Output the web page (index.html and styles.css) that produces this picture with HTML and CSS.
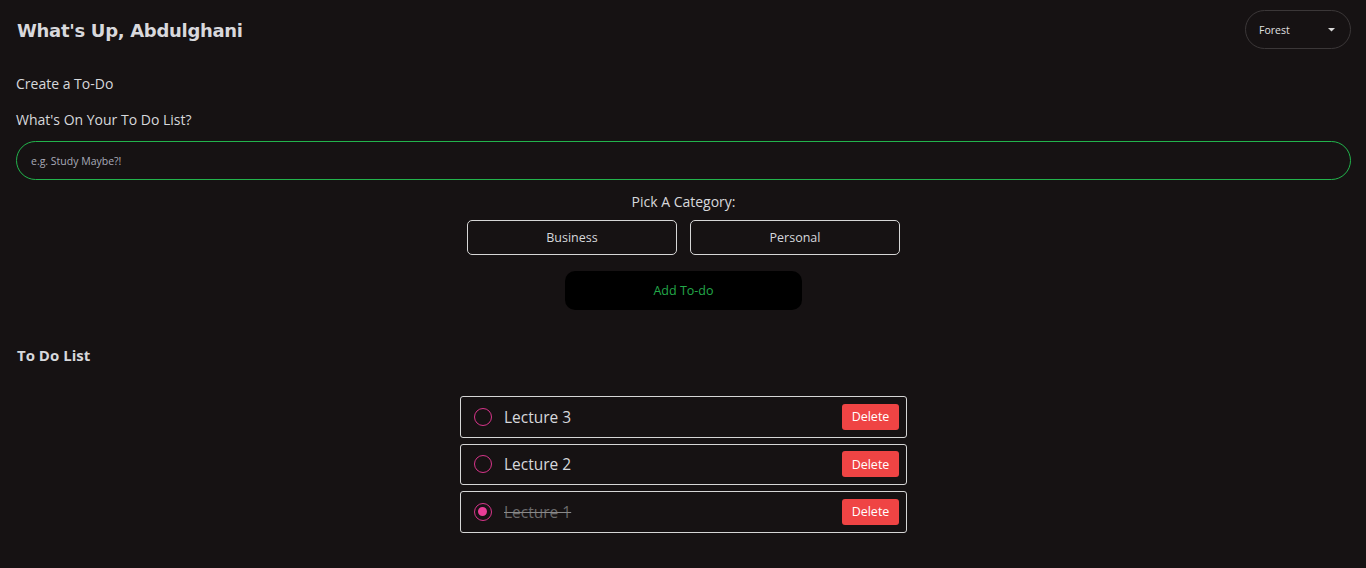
FILE: index.html
```html
<!DOCTYPE html>
<html lang="en">
<head>
<meta charset="utf-8">
<title>Todo</title>
<link rel="stylesheet" href="styles.css">
</head>
<body>
<div class="page">
  <header class="top">
    <h1 class="greeting">What's Up, Abdulghani</h1>
    <div class="theme">
      <span>Forest</span>
      <svg width="7" height="4" viewBox="0 0 7 4"><path d="M0 0h7L3.5 3.5z" fill="#d8d8d8"/></svg>
    </div>
  </header>
  <section class="create">
    <p class="label">Create a To-Do</p>
    <p class="label q">What's On Your To Do List?</p>
    <div class="input">e.g. Study Maybe?!</div>
    <p class="pick">Pick A Category:</p>
    <div class="cats">
      <button class="cat">Business</button>
      <button class="cat">Personal</button>
    </div>
    <button class="add">Add To-do</button>
  </section>
  <h2 class="list-title">To Do List</h2>
  <ul class="list">
    <li class="item"><span class="radio"></span><span class="text">Lecture 3</span><button class="del">Delete</button></li>
    <li class="item"><span class="radio"></span><span class="text">Lecture 2</span><button class="del">Delete</button></li>
    <li class="item done"><span class="radio on"></span><span class="text">Lecture 1</span><button class="del">Delete</button></li>
  </ul>
</div>
</body>
</html>
```

FILE: styles.css
```css
* { box-sizing: border-box; }
html, body { margin: 0; background: #161213; }
body {
  font-family: "Open Sans", "Noto Sans", sans-serif;
  color: #d6d8dc;
  height: 568px;
  overflow: hidden;
}
.page { padding: 10px 15px 0 16px; }
.top { display: flex; justify-content: space-between; align-items: flex-start; }
.greeting {
  margin: 10px 0 0 1px;
  font-family: "DejaVu Sans", sans-serif;
  font-weight: 900;
  font-size: 18px;
  letter-spacing: -0.3px;
  line-height: 22px;
  color: #d8d8dc;
}
.theme {
  width: 106px; height: 39px;
  border: 1px solid #3b3738;
  border-radius: 20px;
  display: flex; align-items: center; justify-content: space-between;
  padding: 0 15px 0 13px;
  font-size: 10.5px;
  color: #e0e0e0;
}
.label { margin: 0; font-size: 14px; line-height: 20px; }
.create .label:first-child { margin-top: 25px; }
.q { margin-top: 16px; }
.input {
  margin-top: 11px;
  height: 39px;
  border: 1px solid #22b34c;
  border-radius: 20px;
  padding: 0 14px;
  display: flex; align-items: center;
  font-size: 10.5px;
  color: #a8aab8;
}
.pick { margin: 12px 0 0; text-align: center; font-size: 14px; line-height: 20px; }
.cats { display: flex; justify-content: center; gap: 13px; margin-top: 8px; }
.cat {
  width: 210px; height: 35px;
  background: transparent;
  border: 1px solid #d6d6d6;
  border-radius: 5px;
  color: #d6d8dc;
  font-family: inherit; font-size: 12.5px;
}
.add {
  display: block;
  margin: 16px auto 0;
  width: 237px; height: 39px;
  background: #000;
  border: none;
  border-radius: 10px;
  color: #23a84a;
  font-family: inherit; font-size: 12.5px;
}
.list-title {
  margin: 35px 0 0 1px;
  font-size: 15px;
  font-weight: 700;
  line-height: 20px;
}
.list {
  list-style: none; margin: 31px 0 0; padding: 0;
  display: flex; flex-direction: column; align-items: center; gap: 6px;
}
.item {
  width: 447px; height: 41.5px;
  border: 1px solid #d6d6d6;
  border-radius: 3px;
  display: flex; align-items: center;
  padding: 0 7px 0 13px;
}
.radio {
  width: 18px; height: 18px;
  border: 1.5px solid #d9358b;
  border-radius: 50%;
  flex: none;
  position: relative;
}
.radio.on::after {
  content: ""; position: absolute;
  left: 3px; top: 3px; width: 9px; height: 9px;
  border-radius: 50%; background: #e93d97;
}
.text { margin-left: 12px; font-size: 15.5px; flex: 1; }
.done .text { color: #6c6b6c; text-decoration: line-through; text-decoration-color: #8a8a8a; }
.del {
  width: 57px; height: 26px;
  background: #ef4444;
  border: none; border-radius: 3px;
  color: #fff;
  font-family: inherit; font-size: 12.5px;
}
```
